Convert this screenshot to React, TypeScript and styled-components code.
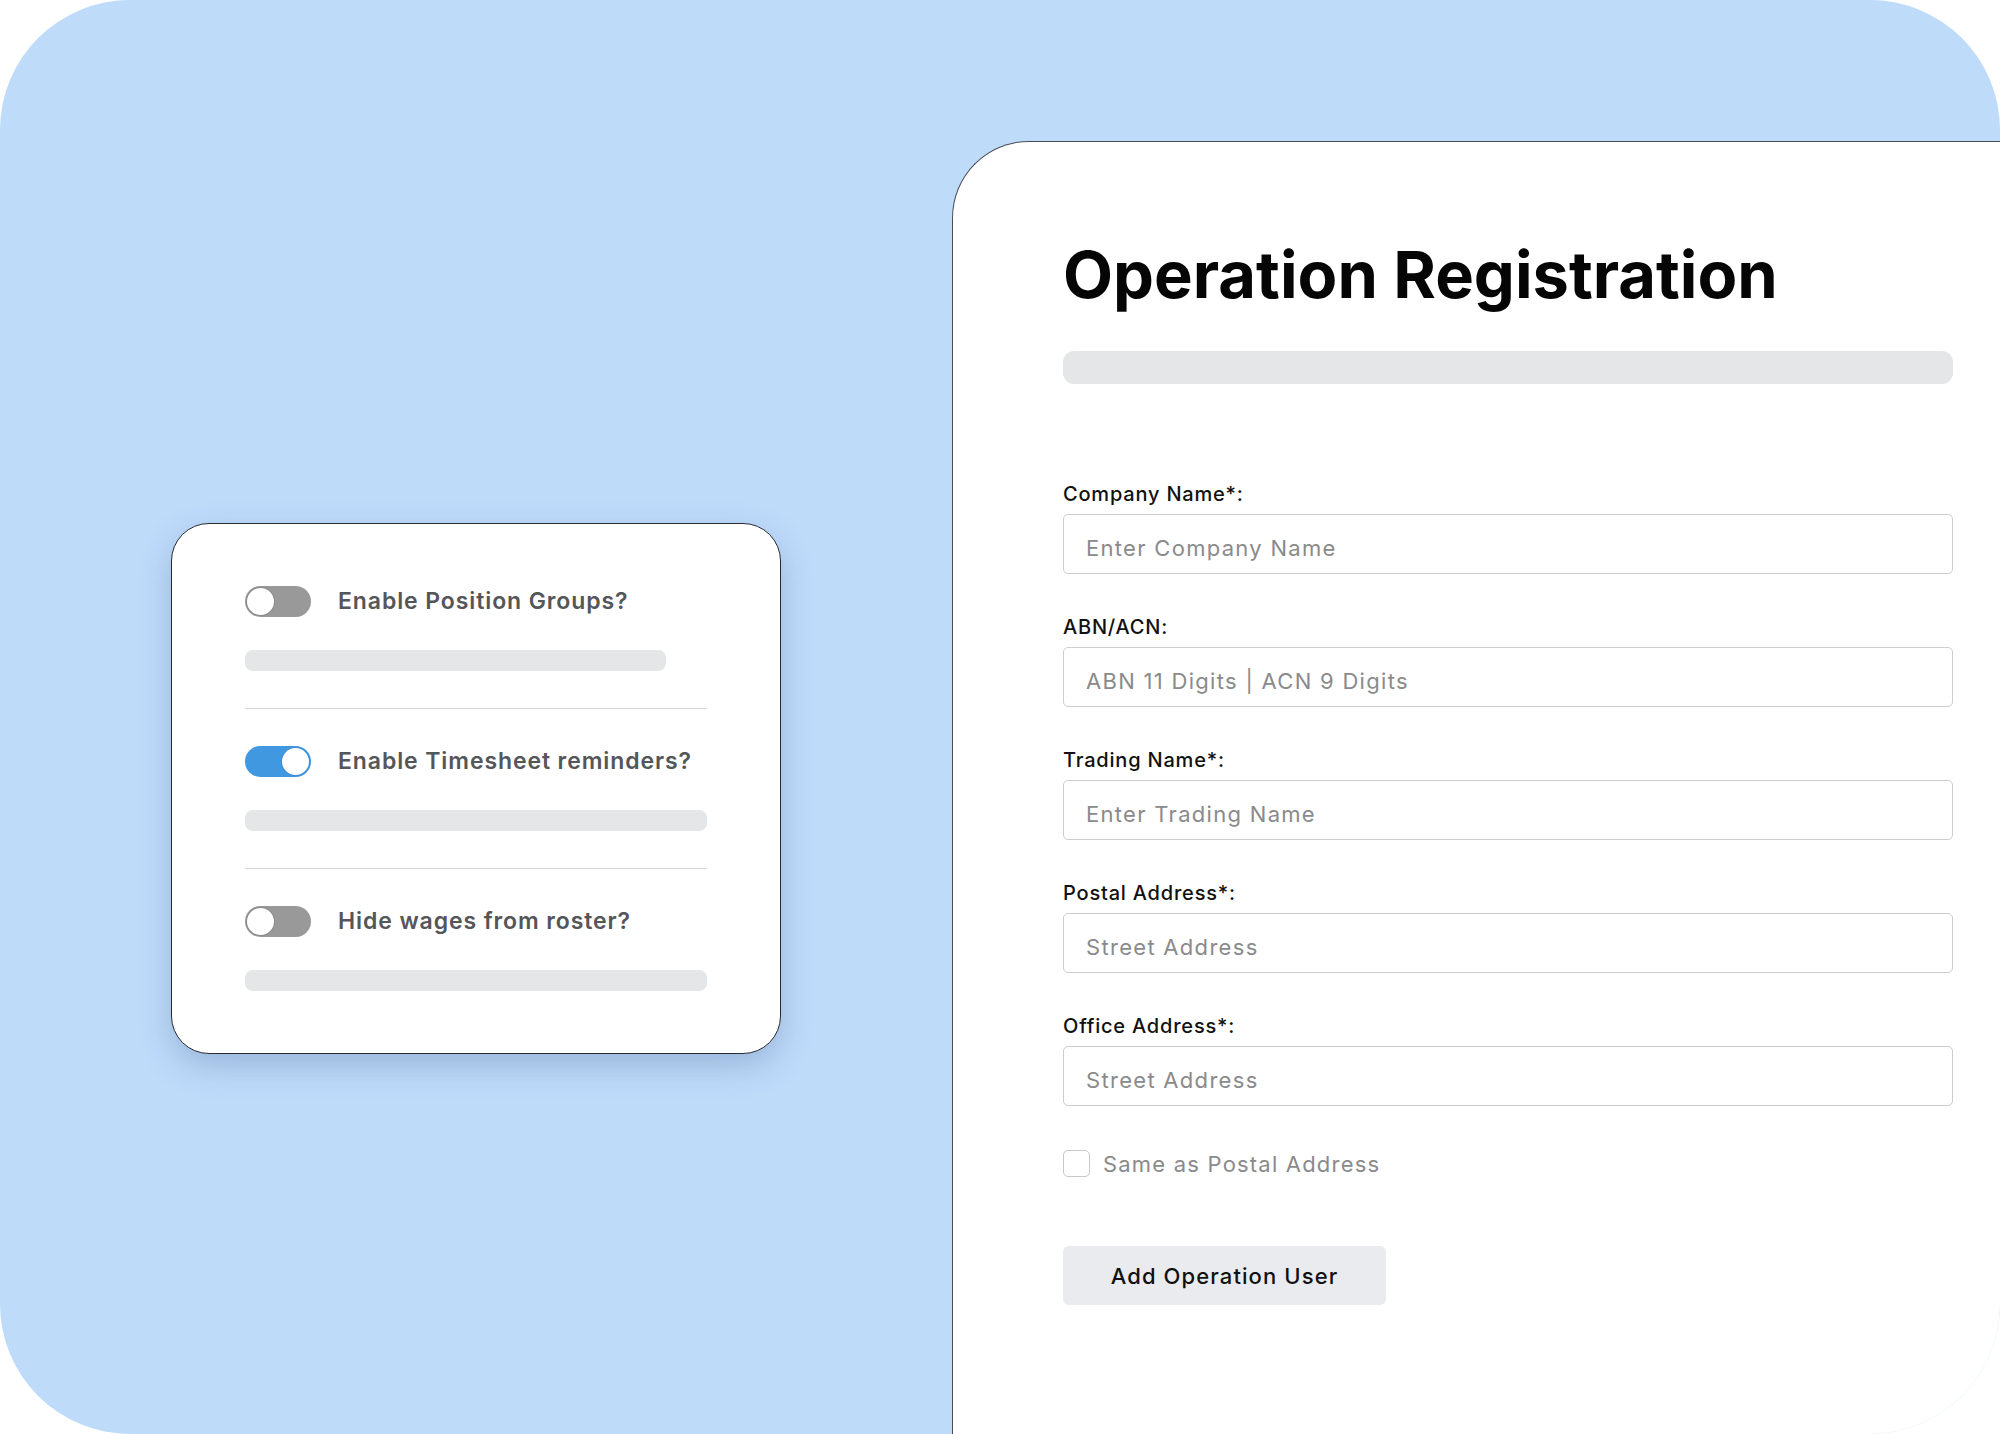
import React from "react";
import styled, { createGlobalStyle } from "styled-components";

const GlobalStyle = createGlobalStyle`
  html, body {
    margin: 0;
    padding: 0;
    background: #ffffff;
  }
  body {
    font-family: Inter, "Noto Sans", "Liberation Sans", sans-serif;
    -webkit-font-smoothing: antialiased;
  }
  * {
    box-sizing: border-box;
  }
`;

const Frame = styled.div`
  width: 2000px;
  height: 1434px;
  display: flex;
  background: #bedbfa;
  border-radius: 130px;
  overflow: hidden;
`;

const LeftArea = styled.div`
  width: 952px;
  flex-shrink: 0;
  padding: 523px 0 0 171px;
`;

const SettingsCard = styled.div`
  width: 610px;
  padding: 62px 73px;
  background: #ffffff;
  border: 1.5px solid #2a2a2e;
  border-radius: 38px;
  box-shadow: 0 12px 32px rgba(60, 90, 140, 0.28);
`;

const Section = styled.div`
  display: flex;
  flex-direction: column;
  gap: 33px;
`;

const ToggleRow = styled.div`
  display: flex;
  align-items: center;
  gap: 27px;
`;

const Track = styled.div<{ $on?: boolean }>`
  position: relative;
  width: 66px;
  height: 31px;
  border-radius: 16px;
  flex-shrink: 0;
  background: ${(p) => (p.$on ? "#4098e0" : "#999999")};
`;

const Knob = styled.div<{ $on?: boolean }>`
  position: absolute;
  top: 2px;
  left: ${(p) => (p.$on ? "37px" : "2px")};
  width: 27px;
  height: 27px;
  border-radius: 50%;
  background: #ffffff;
  box-shadow: 0 0 0 1px ${(p) => (p.$on ? "#3a8ed6" : "#8c8c8c")};
`;

const ToggleLabel = styled.span`
  font-size: 23px;
  font-weight: 600;
  color: #555659;
  letter-spacing: 0.9px;
  line-height: 31px;
`;

const SkeletonBar = styled.div<{ $width?: string; $height?: number }>`
  width: ${(p) => p.$width || "100%"};
  height: ${(p) => p.$height || 21}px;
  border-radius: ${(p) => ((p.$height || 21) > 25 ? 11 : 8)}px;
  background: #e5e6e8;
`;

const Divider = styled.hr`
  margin: 37px 0;
  border: none;
  border-top: 1.5px solid #d4d4d6;
`;

const Panel = styled.div`
  flex: 1;
  margin-top: 141px;
  padding: 100px 47px 0 110px;
  background: #ffffff;
  border-top: 1.5px solid #4a4b55;
  border-left: 1.5px solid #4a4b55;
  border-top-left-radius: 77px;
`;

const Title = styled.h1`
  margin: 0 0 44px;
  font-size: 65px;
  line-height: 1;
  font-weight: 700;
  color: #050505;
  letter-spacing: 0;
`;

const Form = styled.div`
  display: flex;
  flex-direction: column;
  gap: 40px;
  margin-top: 97px;
`;

const Field = styled.label`
  display: flex;
  flex-direction: column;
  gap: 7px;
`;

const FieldLabel = styled.span`
  font-size: 20px;
  line-height: 26px;
  font-weight: 500;
  color: #111111;
  letter-spacing: 0.8px;
`;

const TextInput = styled.input`
  height: 60px;
  width: 100%;
  padding: 8px 22px 0;
  border: 1.5px solid #cdcdcf;
  border-radius: 5px;
  background: #ffffff;
  font-family: inherit;
  font-size: 22px;
  letter-spacing: 1.3px;
  color: #111;
  outline: none;
  &::placeholder {
    color: #8a8a8c;
  }
`;

const CheckRow = styled.label`
  display: flex;
  align-items: center;
  gap: 13px;
  margin-top: 44px;
`;

const CheckBox = styled.span`
  width: 27px;
  height: 27px;
  border: 1.5px solid #c9c9cb;
  border-radius: 5px;
  background: #ffffff;
`;

const CheckText = styled.span`
  font-size: 22px;
  color: #8a8a8c;
  letter-spacing: 1.2px;
`;

const Button = styled.button`
  margin-top: 69px;
  width: 323px;
  height: 59px;
  border: none;
  border-radius: 6px;
  background: #eaebee;
  font-family: inherit;
  font-size: 22px;
  font-weight: 500;
  color: #111111;
  letter-spacing: 1.1px;
  cursor: pointer;
`;

const toggles = [
  { label: "Enable Position Groups?", on: false, bar: "421px" },
  { label: "Enable Timesheet reminders?", on: true, bar: "100%" },
  { label: "Hide wages from roster?", on: false, bar: "100%" },
];

const fields = [
  { label: "Company Name*:", placeholder: "Enter Company Name" },
  { label: "ABN/ACN:", placeholder: "ABN 11 Digits | ACN 9 Digits" },
  { label: "Trading Name*:", placeholder: "Enter Trading Name" },
  { label: "Postal Address*:", placeholder: "Street Address" },
  { label: "Office Address*:", placeholder: "Street Address" },
];

export default function App() {
  return (
    <>
      <GlobalStyle />
      <Frame>
        <LeftArea>
          <SettingsCard>
            {toggles.map((t, i) => (
              <React.Fragment key={t.label}>
                {i > 0 && <Divider />}
                <Section>
                  <ToggleRow>
                    <Track $on={t.on}>
                      <Knob $on={t.on} />
                    </Track>
                    <ToggleLabel>{t.label}</ToggleLabel>
                  </ToggleRow>
                  <SkeletonBar $width={t.bar} />
                </Section>
              </React.Fragment>
            ))}
          </SettingsCard>
        </LeftArea>
        <Panel>
          <Title>Operation Registration</Title>
          <SkeletonBar $height={33} />
          <Form>
            {fields.map((f) => (
              <Field key={f.label}>
                <FieldLabel>{f.label}</FieldLabel>
                <TextInput placeholder={f.placeholder} />
              </Field>
            ))}
          </Form>
          <CheckRow>
            <CheckBox />
            <CheckText>Same as Postal Address</CheckText>
          </CheckRow>
          <Button>Add Operation User</Button>
        </Panel>
      </Frame>
    </>
  );
}
